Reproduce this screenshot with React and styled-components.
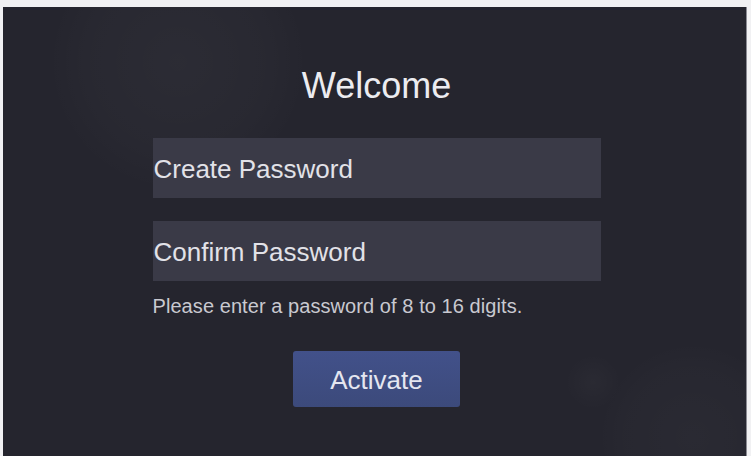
import React from 'react';
import styled, { createGlobalStyle } from 'styled-components';

const GlobalStyle = createGlobalStyle`
  html, body {
    margin: 0;
    padding: 0;
    background: #f1f1f3;
  }
  * {
    box-sizing: border-box;
  }
`;

const Page = styled.div`
  width: 751px;
  height: 456px;
  padding: 7px 0 0 3px;
  overflow: hidden;
`;

const Screen = styled.div`
  width: 744px;
  height: 449px;
  padding: 61px 0 0 4px;
  font-family: 'Liberation Sans', Arial, sans-serif;
  background-color: #25252e;
  background-image:
    radial-gradient(circle at 175px 55px, rgba(255, 255, 255, 0.03) 0, rgba(255, 255, 255, 0.015) 90px, transparent 130px),
    radial-gradient(circle at 590px 375px, rgba(255, 255, 255, 0.025) 0, transparent 28px),
    radial-gradient(circle at 690px 430px, rgba(255, 255, 255, 0.025) 0, rgba(255, 255, 255, 0.012) 70px, transparent 95px);
  border-right: 1px solid #8c8c94;
`;

const Form = styled.div`
  width: 448px;
  margin: 0 auto;
  display: flex;
  flex-direction: column;
`;

const Title = styled.h1`
  margin: 0 0 34px;
  font-size: 36px;
  line-height: 36px;
  font-weight: 400;
  color: #ececf0;
  text-align: center;
`;

const Field = styled.input`
  width: 448px;
  height: 60px;
  margin-bottom: ${p => p.$gap}px;
  padding: 2px 0 0 1px;
  border: none;
  outline: none;
  background: #3a3a47;
  font-family: 'Liberation Sans', Arial, sans-serif;
  font-size: 26px;
  color: #e6e6ea;

  &::placeholder {
    color: #e2e2e8;
    opacity: 1;
  }
`;

const Hint = styled.p`
  margin: 0 0 35px;
  font-size: 20px;
  line-height: 20px;
  letter-spacing: 0.07px;
  color: #c9c9d0;
`;

const Button = styled.button`
  align-self: center;
  width: 167px;
  height: 56px;
  padding: 2px 0 0;
  border: none;
  border-radius: 3px;
  background: linear-gradient(180deg, #42518a 0%, #3c4a7b 100%);
  font-family: 'Liberation Sans', Arial, sans-serif;
  font-size: 26px;
  color: #e4e6f0;
  cursor: pointer;
`;

const App = () => {
  return (
    <Page>
      <GlobalStyle />
      <Screen>
        <Form>
          <Title>Welcome</Title>
          <Field type="password" placeholder="Create Password" $gap={23} />
          <Field type="password" placeholder="Confirm Password" $gap={15} />
          <Hint>Please enter a password of 8 to 16 digits.</Hint>
          <Button>Activate</Button>
        </Form>
      </Screen>
    </Page>
  );
};

export default App;
